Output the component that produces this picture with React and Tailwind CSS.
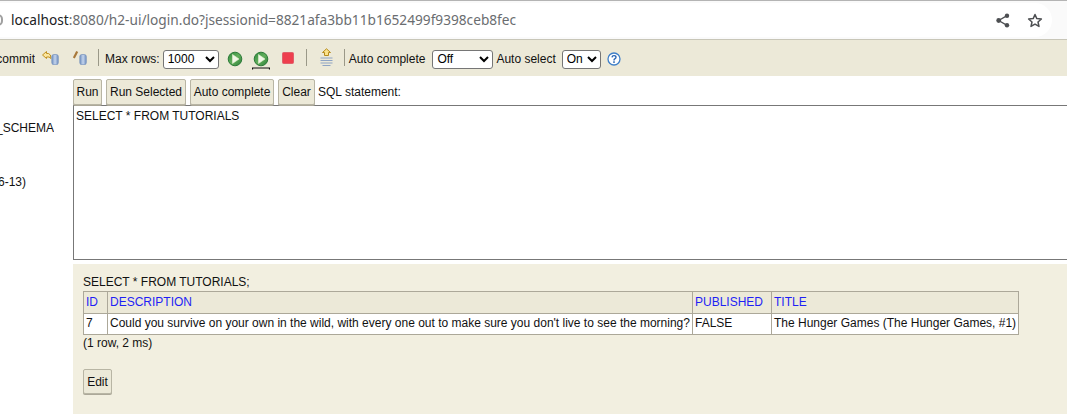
import React from "react";

const font = "font-['Liberation_Sans',Arial,sans-serif]";

function Divider() {
  return <div className="w-px h-[17px] bg-[#9a9888] mb-[3px]" />;
}

function Db({ id, x }) {
  return (
    <>
      <defs>
        <linearGradient id={id} x1="0" x2="1" y1="0" y2="0">
          <stop offset="0" stopColor="#6f8fc0" />
          <stop offset="0.5" stopColor="#c4d4ec" />
          <stop offset="1" stopColor="#6f8fc0" />
        </linearGradient>
      </defs>
      <rect x={x} y="3.5" width="6.5" height="10.2" rx="2" fill={`url(#${id})`} stroke="#7590bb" strokeWidth="0.7" />
    </>
  );
}

function CommitIcon() {
  return (
    <svg width="17" height="14" viewBox="0 0 17 14">
      <path d="M0.5 4 L4.5 0.5 V2.5 H6.5 Q9 3 9 7.5 L7 6 H4.5 V7.5 Z" fill="#fbe6a0" stroke="#c09020" strokeWidth="1" />
      <Db id="dbCommit" x="9.8" />
    </svg>
  );
}

function RollbackIcon() {
  return (
    <svg width="14" height="14" viewBox="0 0 14 14">
      <path d="M0.8 7 L4.2 0.6" stroke="#a8783a" strokeWidth="2.2" />
      <Db id="dbRollback" x="6.8" />
    </svg>
  );
}

function PlayIcon({ id, underline }) {
  return (
    <svg width="18" height="20" viewBox="0 0 18 20">
      <defs>
        <linearGradient id={id} x1="0" x2="1" y1="0" y2="1">
          <stop offset="0" stopColor="#2f8a3c" />
          <stop offset="0.5" stopColor="#62ae5c" />
          <stop offset="1" stopColor="#2c7f38" />
        </linearGradient>
      </defs>
      <circle cx="9" cy="8" r="6.8" fill={`url(#${id})`} stroke="#2c7a38" strokeWidth="1" />
      <path d="M6.5 3.5 L13 8 L6.5 12.5 Z" fill="#f2f7e8" stroke="#e4f0d0" strokeWidth="0.6" />
      {underline && <path d="M0.5 18.5 V17 H17.5 V18.5" fill="none" stroke="#111" strokeWidth="1.2" />}
    </svg>
  );
}

function StopIcon() {
  return (
    <svg width="12" height="12" viewBox="0 0 12 12">
      <rect x="0.5" y="0.5" width="11" height="11" rx="1" fill="#ee3f4e" stroke="#e0606c" />
    </svg>
  );
}

function HistoryIcon() {
  return (
    <svg width="13" height="19" viewBox="0 0 13 19">
      <path d="M6.5 0.8 L10.5 4.5 H8.5 V7.5 H4.5 V4.5 H2.5 Z" fill="#fbe28a" stroke="#b58a1e" strokeWidth="1" />
      <path d="M0.5 10 H12.5 M0.5 12.5 H12.5 M0.5 15 H12.5 M2.5 17.5 H10.5" stroke="#8ea4c4" strokeWidth="1" />
    </svg>
  );
}

function HelpIcon() {
  return (
    <svg width="14" height="14" viewBox="0 0 14 14">
      <circle cx="7" cy="7" r="6" fill="#fff" stroke="#3e7fc8" strokeWidth="1.3" />
      <path d="M5 5.4 Q5.2 3.6 7 3.6 Q9 3.6 9 5.2 Q9 6.2 7.8 6.8 Q7 7.2 7 8.4" fill="none" stroke="#2a66b4" strokeWidth="1.4" />
      <rect x="6.2" y="9.3" width="1.6" height="1.6" fill="#2a66b4" />
    </svg>
  );
}

function ShareIcon() {
  return (
    <svg width="14" height="15" viewBox="0 0 14 15" fill="#4d4f52">
      <circle cx="11" cy="2.7" r="2.2" />
      <circle cx="11" cy="12.3" r="2.2" />
      <circle cx="2.7" cy="7.5" r="2.4" />
      <path d="M2.7 7.5 L11 2.7 M2.7 7.5 L11 12.3" stroke="#4d4f52" strokeWidth="1.4" />
    </svg>
  );
}

function StarIcon() {
  return (
    <svg width="16" height="15" viewBox="0 0 16 15">
      <path d="M8 1.5 L9.8 5.6 L14.4 6 L11 9 L12 13.4 L8 11.1 L4 13.4 L5 9 L1.6 6 L6.2 5.6 Z" fill="none" stroke="#4d4f52" strokeWidth="1.5" strokeLinejoin="round" />
    </svg>
  );
}

function Btn({ children, className = "h-[26px]" }) {
  return (
    <button className={`block px-[1px] bg-[#ece9d8] border border-[#b8b5a4] rounded-[2px] text-[12px] text-[#111] shadow-[0_1px_0_#aca899] ${className}`}>
      {children}
    </button>
  );
}

function Select({ value, className = "" }) {
  return (
    <select
      defaultValue={value}
      className={`h-[19px] bg-white border border-[#767676] rounded-[3px] pl-0 text-[12px] text-black ${className}`}
      style={{ appearance: "auto" }}
    >
      <option>{value}</option>
    </select>
  );
}

const headers = [
  { label: "ID", w: "w-[24px]" },
  { label: "DESCRIPTION", w: "w-[585px]" },
  { label: "PUBLISHED", w: "w-[79px]" },
  { label: "TITLE", w: "w-[247px]" },
];

const row = [
  "7",
  "Could you survive on your own in the wild, with every one out to make sure you don't live to see the morning?",
  "FALSE",
  "The Hunger Games (The Hunger Games, #1)",
];

export default function App() {
  return (
    <div className={`${font} h-[414px] w-[1067px] overflow-hidden bg-white text-[12px] leading-[14px] text-[#111]`}>
      {/* browser address bar */}
      <div className="h-[40px] bg-[#fafafa] border-t border-t-[#b4b4b4] border-b border-b-[#c8c6b8] flex items-center">
        <div className="flex-1 h-[34px] mr-[15px] bg-white rounded-r-[17px] flex items-center">
          <div className="w-[3px] h-[12px] overflow-hidden flex justify-end">
            <div className="w-[10px] h-[12px] shrink-0 rounded-full border-2 border-[#a0a0a0]" />
          </div>
          <div className="ml-[8px] text-[13.68px] font-['Noto_Sans',sans-serif] whitespace-nowrap">
            <span className="text-[#202124]">localhost</span>
            <span className="text-[#6a6d70]">:8080/h2-ui/login.do?jsessionid=8821afa3bb11b1652499f9398ceb8fec</span>
          </div>
          <div className="ml-auto flex items-center gap-[17px] pr-[9px]">
            <ShareIcon />
            <StarIcon />
          </div>
        </div>
      </div>

      {/* h2 toolbar */}
      <div className="h-[36px] pt-[2px] bg-[#ece9d8] flex items-center whitespace-nowrap">
        <div className="w-[35px] overflow-hidden flex justify-end">
          <span className="shrink-0">Auto commit</span>
        </div>
        <div className="ml-[7px] mb-[3px] flex items-center"><CommitIcon /></div>
        <div className="ml-[14px] mb-[3px] flex items-center"><RollbackIcon /></div>
        <div className="ml-[11px]"><Divider /></div>
        <span className="ml-[6px]">Max rows:</span>
        <Select value="1000" className="ml-[3px] w-[56px]" />
        <div className="ml-[7px] mt-[3px]"><PlayIcon id="playA" /></div>
        <div className="ml-[8px] mt-[3px]"><PlayIcon id="playB" underline /></div>
        <div className="ml-[12px] mb-[3px]"><StopIcon /></div>
        <div className="ml-[12px]"><Divider /></div>
        <div className="ml-[13px] mb-[3px]"><HistoryIcon /></div>
        <div className="ml-[11px]"><Divider /></div>
        <span className="ml-[4px]">Auto complete</span>
        <Select value="Off" className="ml-[7px] w-[61px]" />
        <span className="ml-[3px]">Auto select</span>
        <Select value="On" className="ml-[6px] w-[39px]" />
        <div className="ml-[6px]"><HelpIcon /></div>
      </div>

      <div className="flex h-[338px]">
        {/* table tree, clipped by the frame */}
        <div className="w-[73px] shrink-0 overflow-hidden">
          <div className="w-[54px] overflow-hidden flex justify-end mt-[45px]">
            <span className="shrink-0 whitespace-nowrap">INFORMATION_SCHEMA</span>
          </div>
          <div className="w-[26px] overflow-hidden flex justify-end mt-[40px]">
            <span className="shrink-0 whitespace-nowrap">H2 2.1.214 (2022-06-13)</span>
          </div>
        </div>

        <div className="flex-1 min-w-0 overflow-hidden">
          <div className="h-[29px] pt-[3px] flex gap-[4px] items-start whitespace-nowrap">
            <Btn className="h-[26px] w-[29px]">Run</Btn>
            <Btn className="h-[26px] w-[80px]">Run Selected</Btn>
            <Btn className="h-[26px] w-[84px]">Auto complete</Btn>
            <Btn className="h-[26px] w-[37px]">Clear</Btn>
            <span className="-ml-[1px] mt-[6px]">SQL statement:</span>
          </div>

          <div className="h-[155px] w-[1010px] border border-[#777] pt-[3px] pl-[2px]">
            SELECT * FROM TUTORIALS
          </div>

          <div className="mt-[4px] h-[150px] bg-[#f2efe0] pt-[11px] pl-[10px]">
            <div className="h-[15px]">SELECT * FROM TUTORIALS;</div>
            <table className="border-collapse table-fixed w-[936px] mt-[1px]">
              <thead>
                <tr className="bg-[#ece9d8]">
                  {headers.map((h) => (
                    <th key={h.label} className={`${h.w} h-[22px] border border-[#aca899] px-[2px] pb-[2px] text-left font-normal text-[#1f1ff5]`}>
                      {h.label}
                    </th>
                  ))}
                </tr>
              </thead>
              <tbody>
                <tr className="bg-white">
                  {row.map((c) => (
                    <td key={c} className="h-[21px] border border-[#aca899] px-[2px] pb-[2px] whitespace-nowrap overflow-hidden">
                      {c}
                    </td>
                  ))}
                </tr>
              </tbody>
            </table>
            <div className="mt-[1px] h-[14px]">(1 row, 2 ms)</div>
            <Btn className="mt-[19px] w-[29px] h-[25px]">Edit</Btn>
          </div>
        </div>
      </div>
    </div>
  );
}
